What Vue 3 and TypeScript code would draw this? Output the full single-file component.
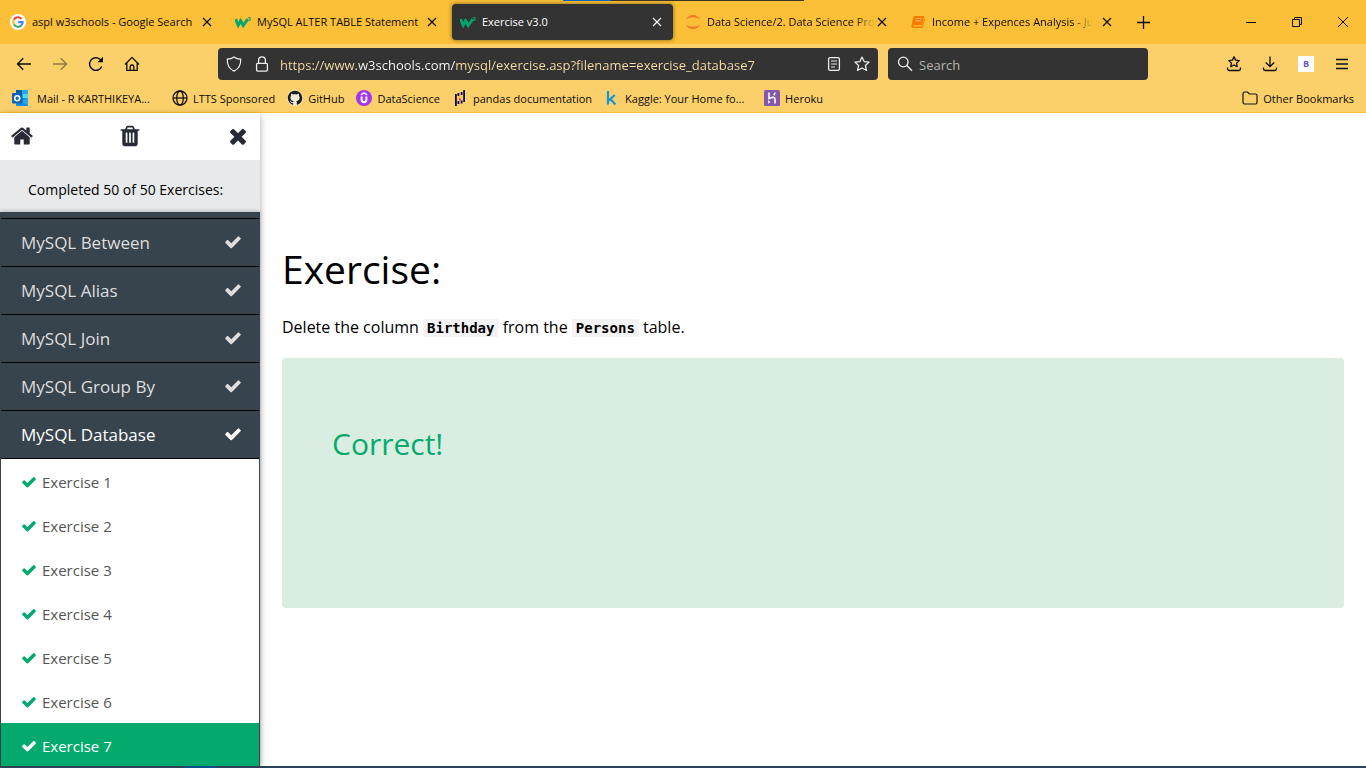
<script setup lang="ts">
import { ref } from 'vue'

interface Tab { icon: string; title: string; active?: boolean; faded?: boolean }
interface Bookmark { icon: string; label: string; cut?: boolean }

const icons: Record<string, string> = {
  google: `<circle cx="8" cy="8" r="8" fill="#fff"/><g fill="none" stroke-width="2.1"><path d="M11.4 4.7A4.7 4.7 0 0 0 4 5.6" stroke="#ea4335"/><path d="M4 5.6A4.7 4.7 0 0 0 4 10.5" stroke="#fbbc05"/><path d="M4 10.5A4.7 4.7 0 0 0 11.1 11.6" stroke="#34a853"/><path d="M11.1 11.6A4.7 4.7 0 0 0 12.7 8.1H8.2" stroke="#4285f4"/></g>`,
  w3: `<path d="M0.5 5 3.2 11.3 5.6 7 8.2 11.5 12.8 5" fill="none" stroke="#04a56b" stroke-width="2.9"/><path d="M5 5.2 6.6 8.6" stroke="#04a56b" stroke-width="2.4"/><text x="12.6" y="7" font-size="6" font-weight="700" font-family="Open Sans, sans-serif" fill="#04a56b">3</text>`,
  jupyter: `<path d="M1 5.6C3.6-.6 12.400-.6 15 5.600 11.500 2.600 4.500 2.600 1 5.600ZM1 10.400c2.600 6.200 11.400 6.200 14 0-3.500 3-10.500 3-14 0Z" fill="#f37726"/>`,
  book: `<path d="M4.600 2h8.900q1 0 .7 1l-2 7.500q-.2.700-1 .7H3.600q-1 .3-.7 1.200h9.200L14.300 4.500l.8.500-2.200 8q-.3 1-1.300 1H3q-1.600 0-1.700-1.800L3.500 3q.3-1 1.100-1Z" fill="#f57c00"/><path d="M5.800 4.600h6M5.200 6.800h6" stroke="#ffc27a" stroke-width=".8"/>`,
  outlook: `<path d="M4 0h12v8H4z" fill="#28a8ea"/><path d="M4 0h6v5H4z" fill="#0a5ea8"/><path d="M10 4h6v4h-6z" fill="#50d9ff"/><path d="M4 8h12v8H5q-1 0-1-1z" fill="#1490df"/><path d="M16 8v7.500L9 11.500z" fill="#28a8ea"/><rect y="3" width="10.500" height="10.500" rx="1" fill="#0a64b8"/><circle cx="5.200" cy="8.200" r="2.500" fill="none" stroke="#fff" stroke-width="1.600"/>`,
  globe: `<g fill="none" stroke="#15141a" stroke-width="1.300"><circle cx="8" cy="8" r="7"/><ellipse cx="8" cy="8" rx="3.300" ry="7"/><path d="M1 8h14"/></g>`,
  github: `<circle cx="8" cy="8" r="7.800" fill="#f3e9d6"/><path transform="translate(.8 .8) scale(.9)" fill="#1b1f23" d="M8 0C3.580 0 0 3.580 0 8c0 3.540 2.290 6.530 5.470 7.590.4.070.55-.17.55-.38 0-.19-.01-.82-.01-1.490-2.010.37-2.530-.49-2.690-.94-.09-.23-.48-.94-.82-1.130-.28-.15-.68-.52-.01-.53.63-.01 1.080.58 1.230.82.72 1.210 1.870.87 2.330.66.070-.52.28-.87.51-1.070-1.780-.2-3.640-.89-3.640-3.950 0-.87.31-1.590.82-2.150-.08-.2-.36-1.020.08-2.120 0 0 .67-.21 2.200.82.64-.18 1.320-.27 2-.27s1.360.090 2 .27c1.530-1.040 2.200-.82 2.200-.82.44 1.100.16 1.920.080 2.120.51.56.82 1.270.82 2.150 0 3.070-1.870 3.750-3.650 3.950.29.25.54.73.54 1.480 0 1.070-.01 1.930-.01 2.200 0 .21.15.46.55.38A8.010 8.010 0 0 0 16 8c0-4.420-3.580-8-8-8z"/>`,
  udemy: `<circle cx="8" cy="8" r="8" fill="#a435f0"/><path d="M4.800 4.800 8 2.800l3.200 2" fill="none" stroke="#fff" stroke-width="1.400"/><path d="M5.600 6.500v3.300a2.400 2.400 0 0 0 4.800 0V6.500" fill="none" stroke="#fff" stroke-width="2"/>`,
  pandas: `<g fill="#130754"><path d="M3 4h1.800v12H3zM11.200 0H13v12h-1.800zM5.500 3h1.800v3H5.500zM8.700 2h1.800v3H8.700zM5.500 11h1.800v3H5.500zM8.700 10.500h1.800v3H8.700z"/></g><path d="M7 5.800h1.800v1.600H7z" fill="#ffca00"/><path d="M7 8.400h1.800v1.800H7z" fill="#e70488"/>`,
  kaggle: `<path d="M4 1v13.600M10.800 5 4.600 10.600M6.400 9l5 5.500" fill="none" stroke="#1696cf" stroke-width="2.200"/>`,
  heroku: `<rect width="16" height="16" rx="1.500" fill="#8257ad"/><path d="M5 2.500v6q6-2.500 6 .5v4.500M11 2.500q-.2 1.500-1.300 2.600" fill="none" stroke="#fff" stroke-width="1.600"/><path d="m4.200 10 2.200 1.900-2.200 1.900z" fill="#fff"/>`,
  folder: `<path d="M1 3.500q0-1.500 1.500-1.500h3l1.800 2h6.200Q15 4 15 5.500v7q0 1.500-1.500 1.500h-11Q1 14 1 12.500z" fill="none" stroke="#15141a" stroke-width="1.200"/>`,
  back: `<path d="M15 8H1.500M7.200 2.300 1.500 8l5.700 5.700" fill="none" stroke="currentColor" stroke-width="1.300"/>`,
  forward: `<path d="M1 8h13.500M8.800 2.300 14.500 8l-5.700 5.700" fill="none" stroke="currentColor" stroke-width="1.300"/>`,
  reload: `<path d="M13.700 10.400A6.300 6.300 0 1 1 12 3.300L13.600 5" fill="none" stroke="currentColor" stroke-width="1.400"/><path d="M15 .8v5.400H9.600z" fill="currentColor"/>`,
  home: `<g fill="none" stroke="currentColor" stroke-width="1.300" stroke-linejoin="round"><path d="M1 8.500 8 1.400l7 7.100M2.800 7v7.400h10.400V7"/><path d="M6.200 14.400v-3.600a1.800 1.800 0 0 1 3.600 0v3.600"/></g>`,
  shield: `<path d="M8 .9c2 1.500 4.300 2.100 6.700 2.200.3 5.600-1.500 9.600-6.700 12C2.800 12.700 1 8.700 1.300 3.100 3.700 3 6 2.400 8 .9Z" fill="none" stroke="currentColor" stroke-width="1.200"/>`,
  lock: `<g fill="none" stroke="currentColor" stroke-width="1.300"><rect x="2.600" y="7.300" width="10.800" height="7.800" rx="1"/><path d="M4.600 7V4.200a3.400 3.400 0 0 1 6.800 0V7"/></g>`,
  reader: `<rect x="2.600" y="1.600" width="10.800" height="12.800" rx="1.600" fill="none" stroke="currentColor" stroke-width="1.300"/><path d="M5 5h6M5 8h6M5 11h4" stroke="currentColor" stroke-width="1.200"/>`,
  star: `<path d="m8 1 2.100 4.600 5 .5-3.700 3.400 1.100 4.900L8 11.900l-4.500 2.500 1.100-4.900L.9 6.100l5-.5z" fill="none" stroke="currentColor" stroke-width="1.200" stroke-linejoin="round"/>`,
  search: `<circle cx="6.300" cy="6" r="4.800" fill="none" stroke="currentColor" stroke-width="1.300"/><path d="m9.800 9.500 5.200 5.300" stroke="currentColor" stroke-width="1.400"/>`,
  savedStar: `<path d="m8 .8 1.600 3.300 3.600.5-2.600 2.500.6 3.600L8 9l-3.200 1.700.6-3.600-2.600-2.500 3.600-.5zM1.500 11.500v1.300q0 1.700 1.700 1.700h9.600q1.700 0 1.700-1.700v-1.300" fill="none" stroke="currentColor" stroke-width="1.300" stroke-linejoin="round"/>`,
  download: `<path d="M8 .5v10M3.800 6.500 8 10.700l4.200-4.200M1.500 11.500v1.300q0 1.700 1.700 1.700h9.600q1.700 0 1.700-1.700v-1.300" fill="none" stroke="currentColor" stroke-width="1.300"/>`,
  menu: `<path d="M2 3.500h12M2 8h12M2 12.500h12" stroke="currentColor" stroke-width="1.300"/>`,
  addon: `<path d="M0 0h16v16H0z" fill="#fff"/><text x="8" y="11.300" text-anchor="middle" font-size="9" font-weight="700" font-family="Open Sans, sans-serif" fill="#6558c8">B</text>`,
  close: `<path d="m4 4 8 8M12 4l-8 8" stroke="currentColor" stroke-width="1.200"/>`,
  plus: `<path d="M8.500 2v13M2 8.500h13" stroke="currentColor" stroke-width="1.300"/>`,
  minimise: `<path d="M3 8.500h10" stroke="currentColor"/>`,
  restore: `<path d="M3.500 5.500h7v7h-7zM5.500 5V3.500h7v7H11" fill="none" stroke="currentColor"/>`,
  quit: `<path d="m3 3 10 10M13 3 3 13" stroke="currentColor"/>`,
}

const glyphs = {
  home: 'M1472 992v480q0 26-19 45t-45 19h-384v-384h-256v384h-384q-26 0-45-19t-19-45v-480q0-1 .5-3t.5-3l575-474 575 474q1 2 1 6zm223-69l-62 74q-8 9-21 11h-3q-13 0-21-7l-692-577-692 577q-12 8-24 7-13-2-21-11l-62-74q-8-10-7-23.500t11-21.500l719-599q32-26 76-26t76 26l244 204v-195q0-14 9-23t23-9h192q14 0 23 9t9 23v408l219 182q10 8 11 21.500t-7 23.500z',
  trash: 'M704 1376v-704q0-14-9-23t-23-9h-64q-14 0-23 9t-9 23v704q0 14 9 23t23 9h64q14 0 23-9t9-23zm256 0v-704q0-14-9-23t-23-9h-64q-14 0-23 9t-9 23v704q0 14 9 23t23 9h64q14 0 23-9t9-23zm256 0v-704q0-14-9-23t-23-9h-64q-14 0-23 9t-9 23v704q0 14 9 23t23 9h64q14 0 23-9t9-23zm-544-992h448l-48-117q-7-9-17-11h-317q-10 2-17 11zm928 32v64q0 14-9 23t-23 9h-96v948q0 83-47 143.500t-113 60.500h-832q-66 0-113-58.500t-47-141.500v-952h-96q-14 0-23-9t-9-23v-64q0-14 9-23t23-9h309l70-167q15-37 54-63t79-26h320q40 0 79 26t54 63l70 167h309q14 0 23 9t9 23z',
  times: 'M1490 1322q0 40-28 68l-136 136q-28 28-68 28t-68-28l-294-294-294 294q-28 28-68 28t-68-28l-136-136q-28-28-28-68t28-68l294-294-294-294q-28-28-28-68t28-68l136-136q28-28 68-28t68 28l294 294 294-294q28-28 68-28t68 28l136 136q28 28 28 68t-28 68l-294 294 294 294q28 28 28 68z',
  check: 'M1671 566q0 40-28 68l-724 724-136 136q-28 28-68 28t-68-28l-136-136-362-362q-28-28-28-68t28-68l136-136q28-28 68-28t68 28l294 295 656-657q28-28 68-28t68 28l136 136q28 28 28 68z',
}

const tabs: Tab[] = [
  { icon: 'google', title: 'aspl w3schools - Google Search' },
  { icon: 'w3', title: 'MySQL ALTER TABLE Statement' },
  { icon: 'w3', title: 'Exercise v3.0', active: true },
  { icon: 'jupyter', title: 'Data Science/2. Data Science Pro', faded: true },
  { icon: 'book', title: 'Income + Expences Analysis - Ju', faded: true },
]
const bookmarks: Bookmark[] = [
  { icon: 'outlook', label: 'Mail - R KARTHIKEYA...', cut: true },
  { icon: 'globe', label: 'LTTS Sponsored' },
  { icon: 'github', label: 'GitHub' },
  { icon: 'udemy', label: 'DataScience' },
  { icon: 'pandas', label: 'pandas documentation' },
  { icon: 'kaggle', label: 'Kaggle: Your Home fo...', cut: true },
  { icon: 'heroku', label: 'Heroku' },
]
const navButtons = [
  { icon: 'back', label: 'Back' },
  { icon: 'forward', label: 'Forward' },
  { icon: 'reload', label: 'Reload' },
  { icon: 'home', label: 'Home' },
]
const toolButtons = [
  { icon: 'savedStar', label: 'Bookmarks' },
  { icon: 'download', label: 'Downloads' },
  { icon: 'addon', label: 'Extension' },
  { icon: 'menu', label: 'Application menu' },
]
const topics = ['MySQL Between', 'MySQL Alias', 'MySQL Join', 'MySQL Group By', 'MySQL Database']
const openTopic = ref('MySQL Database')
const currentExercise = ref(7)
const url = ref('https://www.w3schools.com/mysql/exercise.asp?filename=exercise_database7')
const query = ref('')
</script>

<template>
  <div class="screen">
    <div class="edge" aria-hidden="true"><span class="edge-blue"></span><span class="edge-dark"></span></div>

    <header class="browser">
      <div class="tabbar">
        <div v-for="(tab, i) in tabs" :key="i" class="tab">
          <div class="tab-body" :class="{ active: tab.active }">
            <svg class="icon" viewBox="0 0 16 16" aria-hidden="true" v-html="icons[tab.icon]"></svg>
            <span class="tab-title"><span :class="{ faded: tab.faded }">{{ tab.title }}</span></span>
            <button class="tab-close" aria-label="Close tab">
              <svg class="icon" viewBox="0 0 16 16" v-html="icons.close"></svg>
            </button>
          </div>
        </div>
        <button class="tool" aria-label="New tab"><svg class="icon" viewBox="0 0 16 16" v-html="icons.plus"></svg></button>
        <div class="window-controls">
          <button v-for="w in ['minimise', 'restore', 'quit']" :key="w" :aria-label="w">
            <svg class="icon" viewBox="0 0 16 16" v-html="icons[w]"></svg>
          </button>
        </div>
      </div>

      <div class="toolbar">
        <div class="tools">
          <button v-for="b in navButtons" :key="b.icon" class="tool" :class="b.icon" :aria-label="b.label">
            <svg class="icon" viewBox="0 0 16 16" v-html="icons[b.icon]"></svg>
          </button>
        </div>
        <div class="field address">
          <svg class="icon" viewBox="0 0 16 16" aria-hidden="true" v-html="icons.shield"></svg>
          <svg class="icon" viewBox="0 0 16 16" aria-hidden="true" v-html="icons.lock"></svg>
          <input v-model="url" class="url" type="text" aria-label="Address" />
          <button aria-label="Reader view"><svg class="icon" viewBox="0 0 16 16" v-html="icons.reader"></svg></button>
          <button aria-label="Bookmark this page"><svg class="icon" viewBox="0 0 16 16" v-html="icons.star"></svg></button>
        </div>
        <div class="field search">
          <svg class="icon" viewBox="0 0 16 16" aria-hidden="true" v-html="icons.search"></svg>
          <input v-model="query" type="text" placeholder="Search" aria-label="Search" />
        </div>
        <div class="tools end">
          <button v-for="b in toolButtons" :key="b.icon" class="tool" :aria-label="b.label">
            <svg class="icon" viewBox="0 0 16 16" v-html="icons[b.icon]"></svg>
          </button>
        </div>
      </div>

      <nav class="bookmarks" aria-label="Bookmarks">
        <a v-for="b in bookmarks" :key="b.label" href="#" :class="[b.icon, { cut: b.cut }]">
          <svg class="icon" viewBox="0 0 16 16" aria-hidden="true" v-html="icons[b.icon]"></svg>{{ b.label }}
        </a>
        <a href="#" class="other">
          <svg class="icon" viewBox="0 0 16 16" aria-hidden="true" v-html="icons.folder"></svg>Other Bookmarks
        </a>
      </nav>
    </header>

    <div class="page">
      <aside class="sidebar">
        <div class="side-tools">
          <a href="#" aria-label="Home"><svg viewBox="0 0 1792 1792"><path :d="glyphs.home" /></svg></a>
          <button aria-label="Delete progress"><svg viewBox="0 0 1792 1792"><path :d="glyphs.trash" /></svg></button>
          <button aria-label="Close menu"><svg viewBox="0 0 1792 1792"><path :d="glyphs.times" /></svg></button>
        </div>
        <p class="progress">Completed 50 of 50 Exercises:</p>
        <div class="menu">
          <button v-for="t in topics" :key="t" class="topic" :class="{ open: t === openTopic }" @click="openTopic = t">
            {{ t }}<svg viewBox="0 0 1792 1792" aria-hidden="true"><path :d="glyphs.check" /></svg>
          </button>
          <a v-for="n in 7" :key="n" href="#" class="exercise" :class="{ current: n === currentExercise }" @click.prevent="currentExercise = n">
            <svg viewBox="0 0 1792 1792" aria-hidden="true"><path :d="glyphs.check" /></svg>Exercise {{ n }}
          </a>
        </div>
      </aside>

      <main class="content">
        <h1>Exercise:</h1>
        <p class="task">Delete the column <code>Birthday</code> from the <code>Persons</code> table.</p>
        <section class="result"><h2>Correct!</h2></section>
      </main>
    </div>

    <div class="taskbar" aria-hidden="true"><span></span></div>
  </div>
</template>

<style>
body { margin: 0; overflow: hidden; }
</style>

<style scoped>
.screen {
  position: relative;
  display: flex;
  flex-direction: column;
  height: 100vh;
  color: #000;
  background: #fff;
  font-family: "Open Sans", "Noto Sans", sans-serif;
}
button, input { font: inherit; color: inherit; border: 0; padding: 0; background: none; }
button { display: flex; align-items: center; justify-content: center; }
a { color: inherit; text-decoration: none; }
.icon { width: 16px; height: 16px; flex: none; display: block; }

.edge { position: absolute; top: 0; left: 563px; display: flex; height: 1px; }
.edge-blue { width: 48px; background: #0a64b4; }
.edge-dark { width: 193px; background: #3a3426; }

.browser { flex: none; font-size: 11px; color: #0c0b10; background: #fbd06a; border-bottom: 1px solid #fbc02f; }
.tabbar { display: flex; align-items: center; height: 44px; background: #fbc037; }
.tab { flex: 0 1 225px; min-width: 0; box-sizing: border-box; padding: 0 2px; }
.tab-body { display: flex; align-items: center; height: 36px; padding: 0 8px; border-radius: 4px; }
.tab-body.active { color: #fff; background: #333; box-shadow: 0 0 4px rgba(0, 0, 0, 0.5); }
.tab-title { flex: 1; min-width: 0; margin-left: 6px; overflow: hidden; white-space: nowrap; line-height: 18px; }
.faded {
  -webkit-mask-image: linear-gradient(to left, transparent, #000 20px);
  mask-image: linear-gradient(to left, transparent, #000 20px);
}
.tab-close { flex: none; }
.tool { width: 36px; height: 36px; }
.tool.forward { opacity: 0.45; }
.window-controls { display: flex; margin-left: auto; }
.window-controls button { width: 46px; height: 44px; }

.toolbar { display: flex; align-items: center; height: 40px; padding: 0 6px; }
.tools { display: flex; }
.field {
  display: flex;
  align-items: center;
  height: 32px;
  border-radius: 4px;
  background: #333;
  color: #eee;
  font-size: 13px;
}
.field input { flex: 1; min-width: 0; height: 32px; padding-top: 2px; box-sizing: border-box; outline: 0; }
.address { flex: 1; margin-left: 68px; padding: 0 8px; gap: 12px; }
.url {
  background-image: linear-gradient(to right, #fbe0ab 79px, #fff 79px, #fff 175px, #fbe0ab 175px);
  background-clip: text;
  -webkit-background-clip: text;
  -webkit-text-fill-color: transparent;
  caret-color: #fff;
}
.address .icon + .url { margin-left: -2px; }
.search { flex: 0 1 260px; margin-left: 10px; gap: 6px; box-sizing: border-box; padding: 0 9px; }
.search input::placeholder { color: #b5b3ae; opacity: 1; }
.tools.end { margin-left: 68px; }

.bookmarks { display: flex; align-items: center; height: 28px; padding: 0 12px; gap: 12px; }
.bookmarks a { display: flex; align-items: center; gap: 5px; white-space: nowrap; }
.bookmarks .cut { min-width: 148px; }
.bookmarks .outlook { gap: 9px; }
.bookmarks .other { margin-left: auto; }

.page { flex: 1; min-height: 0; display: flex; }
.sidebar {
  flex: 0 0 260px;
  display: flex;
  flex-direction: column;
  box-shadow: 0 2px 5px rgba(0, 0, 0, 0.22), 0 2px 10px rgba(0, 0, 0, 0.14);
}
.side-tools { flex: none; display: flex; justify-content: space-between; align-items: center; box-sizing: border-box; height: 47px; padding: 0 10px 2px; background: #fff; color: #282a35; }
.side-tools svg { display: block; width: 24px; height: 24px; }
.sidebar svg { fill: currentColor; }
.progress { flex: none; margin: 0; height: 52px; line-height: 60px; padding: 0 28px; font-size: 14px; background: #e7e9eb; }
.menu {
  flex: 1;
  min-height: 0;
  overflow: hidden;
  padding-top: 6px;
  border: solid #38444d;
  border-width: 0 1px;
  background: linear-gradient(#38444d 12px, #fff 12px);
  box-shadow: 0 -1px 4px rgba(0, 0, 0, 0.2);
}
.topic {
  justify-content: space-between;
  width: 100%;
  height: 48px;
  padding: 0 17px 0 20px;
  border-bottom: 1px solid #000;
  background: #38444d;
  color: #ddd;
  font-size: 17px;
}
.topic:first-child { height: 49px; border-top: 1px solid #000; }
.topic.open { color: #fff; }
.topic svg { width: 18px; height: 18px; margin-bottom: 2px; }
.exercise { display: flex; align-items: center; gap: 5px; box-sizing: border-box; height: 44px; padding: 2px 20px 0; font-size: 15px; color: #555; }
.exercise svg { width: 16px; height: 16px; color: #04aa6d; }
.exercise.current, .exercise.current svg { color: #fff; }
.exercise.current { background: #04aa6d; }

.content { flex: 1; min-width: 0; padding: 128px 22px 0; }
h1 { margin: 0; font-size: 39px; line-height: 56px; font-weight: 400; }
.task { margin: 18px 0; font-size: 16px; line-height: 25px; }
code { padding: 1px 4px; background: #f3f3f3; font: 700 14px "DejaVu Sans Mono", monospace; }
.result { height: 250px; box-sizing: border-box; padding: 64px 50px; border-radius: 4px; background: #d9eee1; }
h2 { margin: 0; font-size: 30px; line-height: 44px; font-weight: 400; color: #04aa6d; }

.taskbar { flex: none; height: 2px; background: #2b4257; }
.taskbar span { display: block; width: 32px; height: 2px; margin-left: 185px; background: #0b4f8a; }
</style>
